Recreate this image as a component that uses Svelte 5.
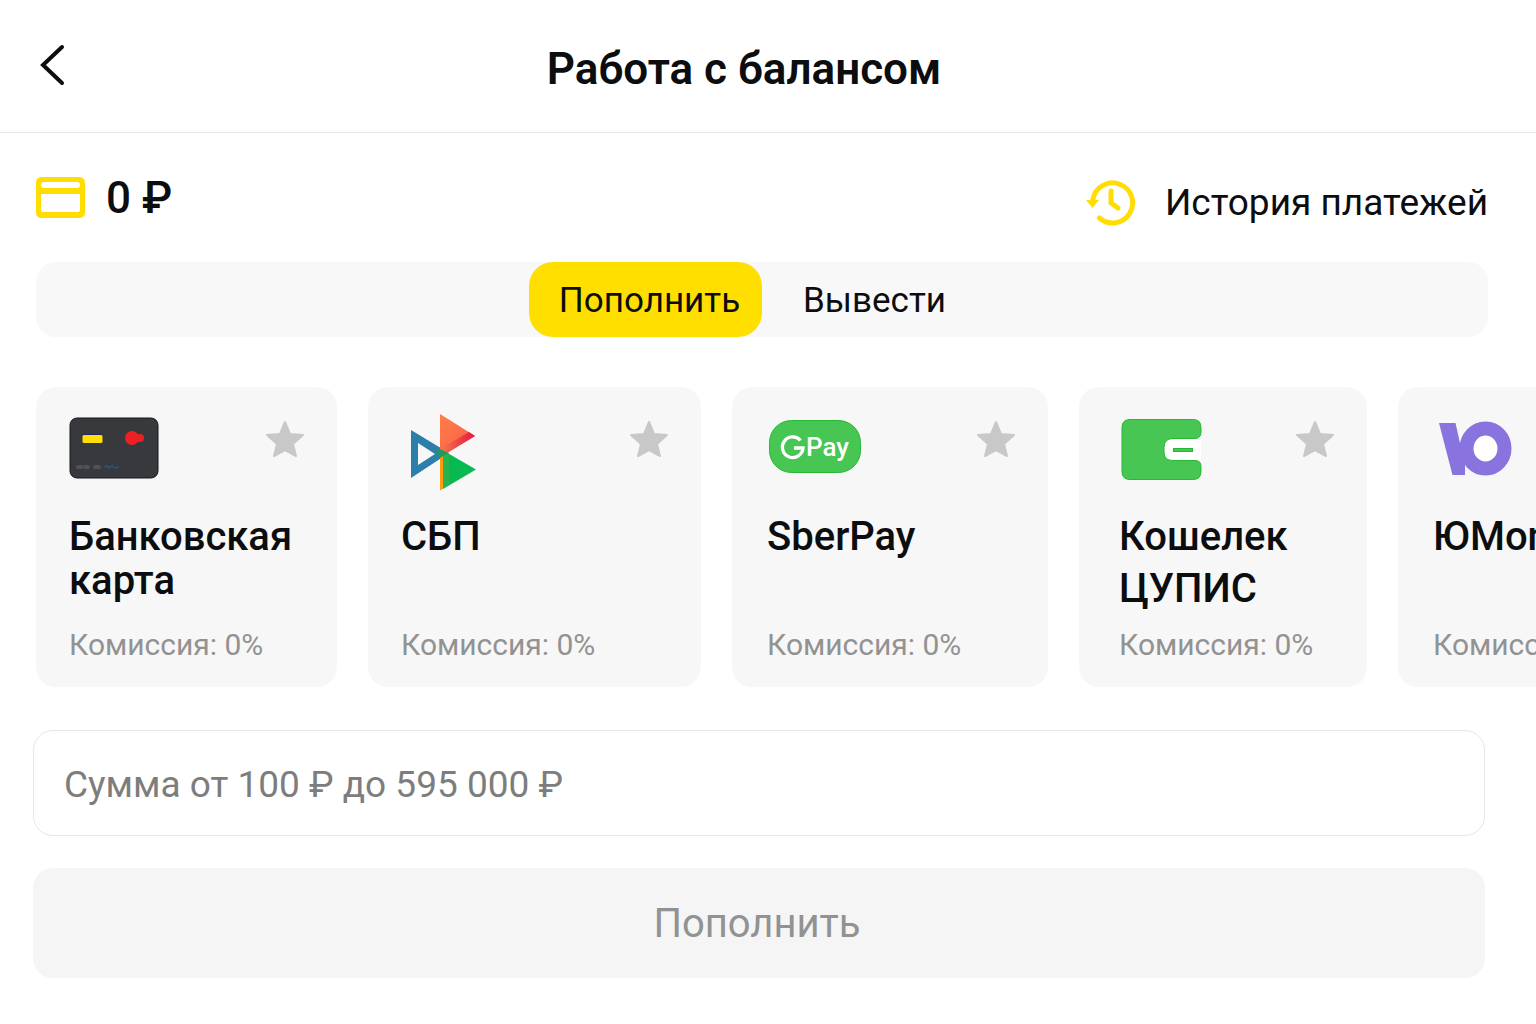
<script lang="ts">
  type Method = {
    id: string
    title: string
    fee: string
    width: number
    loose?: boolean
  }

  const methods: Method[] = [
    { id: 'card', title: 'Банковская карта', fee: '0%', width: 301 },
    { id: 'sbp', title: 'СБП', fee: '0%', width: 333 },
    { id: 'sber', title: 'SberPay', fee: '0%', width: 316 },
    { id: 'cupis', title: 'Кошелек ЦУПИС', fee: '0%', width: 288, loose: true },
    { id: 'yoo', title: 'ЮMoney', fee: '0%', width: 301 },
  ]

  let tab = $state<'in' | 'out'>('in')
  let selected = $state('')
  let amount = $state('')
</script>

{#snippet logo(id: string)}
  <svg class="logo" viewBox="0 0 96 80" aria-hidden="true">
    {#if id === 'card'}
      <rect x="1" y="6" width="88" height="60" rx="7" fill="#38393d" stroke="#17181c" />
      <path d="M14 22.500h18" stroke="#20246b" />
      <rect x="13.500" y="23" width="20" height="8" rx="1.500" fill="#ffe000" />
      <circle cx="63" cy="26" r="7" fill="#ee2024" />
      <circle cx="71" cy="26" r="4" fill="#ee2024" />
      <path d="M9 55h3M16 55h3M26 55h4" stroke="#505257" stroke-width="4" stroke-linecap="round" />
      <path d="M35 55l3-1 2 2 3-2 3 2 4-1" stroke="#2c5170" stroke-width="2" fill="none" />
    {:else if id === 'sbp'}
      <defs>
        <linearGradient id="sbp-orange" x1="0" y1="0" x2="1" y2="1">
          <stop offset="0" stop-color="#ff7f45" />
          <stop offset="1" stop-color="#fa5c4c" />
        </linearGradient>
        <linearGradient id="sbp-red" x1="0" y1="0" x2="1" y2="0">
          <stop offset="0" stop-color="#f47a4c" />
          <stop offset="1" stop-color="#e5173f" />
        </linearGradient>
      </defs>
      <path d="M10 18l38 23-38 25zM17 31v22l17-11z" fill="#2d7eaa" fill-rule="evenodd" />
      <path d="M39 2l35 22-28 17-7-4z" fill="url(#sbp-orange)" />
      <path d="M39 37l29-17 6 4-28 17z" fill="url(#sbp-red)" />
      <path d="M39 44h4v32l-4 2.500z" fill="#fd9c12" />
      <path d="M43 39l32 18.500-33 19.500z" fill="#06b950" />
      <path d="M34 40l5-3 8 4-8 5z" fill="#219861" />
      <path d="M42 44l6-3v31l-6 4z" fill="#2bb24c" />
    {:else if id === 'sber'}
      <rect x="2.500" y="8.500" width="91" height="52" rx="22" fill="#48c653" stroke="#24ba32" />
      <path d="M33.500 28.500A10.300 10.300 0 1 0 36 36H27" fill="none" stroke="#fff" stroke-width="3.300" />
      <text x="39" y="44" class="pay">Pay</text>
    {:else if id === 'cupis'}
      <path d="M82 27H55q-9 0-9 9v4q0 8 9 8h27z" fill="#fff" />
      <path
        d="M11 7.500h63q8 0 8 8v5q0 6-7 6H54q-9 0-9 9v5q0 8 9 8h22q6 0 6 6v5q0 8-8 8H11q-8 0-8-8V15.500q0-8 8-8z"
        fill="#48c653"
        stroke="#24ba32"
      />
      <rect x="54.500" y="36.500" width="19" height="3" fill="#48c653" stroke="#24ba32" />
    {:else}
      <ellipse cx="52.500" cy="36.500" rx="19" ry="20" fill="#fff" stroke="#8873df" stroke-width="14" />
      <path d="M6 11h16.500L27 31l5 20v12H19.500z" fill="#8873df" />
    {/if}
  </svg>
{/snippet}

<div class="page">
  <header>
    <button type="button" class="back" aria-label="Назад">
      <svg viewBox="0 0 32 44" aria-hidden="true"><path d="M26 3L7 21l19 18" /></svg>
    </button>
    <h1>Работа с балансом</h1>
  </header>

  <main>
    <div class="summary">
      <div class="balance">
        <svg viewBox="0 0 52 44" aria-hidden="true">
          <path
            fill-rule="evenodd"
            d="M6 1h37q6 0 6 6v29q0 6-6 6H6q-6 0-6-6V7q0-6 6-6zM8 6q-3 0-3 3t3 3h33q3 0 3-3t-3-3zM5 18v16q0 2 3 2h33q3 0 3-2V18z"
          />
        </svg>
        <span>0 ₽</span>
      </div>
      <a class="history" href="#history">
        <svg viewBox="0 0 52 48" aria-hidden="true">
          <path class="arc" d="M8 20A20 20 0 1 1 14.500 39" />
          <path class="hands" d="M26 12v12l7 5" />
          <path class="tip" d="M1 21h13l-6.500 8z" />
        </svg>
        <span>История платежей</span>
      </a>
    </div>

    <div class="tabs">
      <button type="button" class="tab" class:active={tab === 'in'} onclick={() => (tab = 'in')}>
        Пополнить
      </button>
      <button type="button" class="tab" class:active={tab === 'out'} onclick={() => (tab = 'out')}>
        Вывести
      </button>
    </div>

    <div class="methods">
      {#each methods as m (m.id)}
        <button
          type="button"
          class="method {m.id}"
          style="width: {m.width}px"
          aria-pressed={selected === m.id}
          onclick={() => (selected = m.id)}
        >
          <span class="top">
            {@render logo(m.id)}
            <svg class="star" viewBox="0 0 38 38" aria-hidden="true">
              <path d="M19 2l5 12 13 1-10 9 3 12-11-6-11 6 3-12L1 15l13-1z" />
            </svg>
          </span>
          <span class="title" class:loose={m.loose}>{m.title}</span>
          <span class="fee">Комиссия: {m.fee}</span>
        </button>
      {/each}
    </div>

    <form onsubmit={(e) => e.preventDefault()}>
      <input
        type="text"
        inputmode="numeric"
        aria-label="Сумма"
        placeholder="Сумма от 100 ₽ до 595 000 ₽"
        bind:value={amount}
      />
      <button type="submit" class="submit" disabled={!amount}>Пополнить</button>
    </form>
  </main>
</div>

<style>
  :global(body) {
    margin: 0;
    background: #fff;
  }
  .page {
    font-family: Roboto, 'Noto Sans', sans-serif;
    color: #0c0d0f;
    overflow: hidden;
  }
  button,
  input {
    font: inherit;
    color: inherit;
    border: none;
    box-sizing: border-box;
  }
  button {
    padding: 0;
    background: none;
    cursor: pointer;
  }
  header {
    display: grid;
    grid-template-columns: 48px 1fr 48px;
    align-items: center;
    height: 132px;
    padding: 0 84px 0 36px;
    border-bottom: 1px solid #e8e8e8;
  }
  .back {
    display: flex;
  }
  .back svg {
    width: 32px;
    height: 44px;
    fill: none;
    stroke: #0c0d0f;
    stroke-width: 4;
    stroke-linecap: round;
  }
  h1 {
    margin: 0;
    padding-top: 6px;
    font-size: 44px;
    font-weight: 600;
    line-height: 52px;
    text-align: center;
  }
  main {
    padding: 0 48px 0 36px;
  }
  .summary {
    display: flex;
    justify-content: space-between;
    align-items: center;
    height: 129px;
  }
  .balance,
  .history {
    display: flex;
    align-items: center;
  }
  .balance {
    gap: 18px;
    font-size: 44px;
    font-weight: 500;
  }
  .balance svg {
    width: 52px;
    height: 44px;
    fill: #ffdd00;
  }
  .history {
    gap: 28px;
    padding-top: 10px;
    color: inherit;
    font-size: 37px;
    text-decoration: none;
  }
  .history svg {
    width: 52px;
    height: 48px;
    fill: none;
    stroke: #ffdd00;
    stroke-linecap: round;
  }
  .history .arc,
  .history .hands {
    stroke-width: 5;
  }
  .history .tip {
    fill: #ffdd00;
    stroke: none;
  }
  .tabs {
    display: flex;
    justify-content: center;
    height: 75px;
    border-radius: 20px;
    background: #f8f8f8;
  }
  .tab {
    width: 233px;
    padding-top: 2px;
    border-radius: 24px;
    font-size: 35px;
  }
  .tab:first-child {
    padding-left: 8px;
  }
  .tab:last-child {
    padding-right: 8px;
  }
  .tab.active {
    background: #ffdf00;
  }
  .methods {
    display: flex;
    gap: 31px;
    margin: 50px -48px 0 0;
    overflow: hidden;
  }
  .method {
    display: flex;
    flex: none;
    flex-direction: column;
    height: 300px;
    padding: 25px 33px 24px;
    border-radius: 20px;
    background: #f7f7f7;
    text-align: left;
  }
  .sber,
  .yoo {
    padding-left: 35px;
  }
  .cupis {
    padding-left: 40px;
  }
  .top {
    display: flex;
    justify-content: space-between;
    align-self: stretch;
  }
  .logo {
    width: 96px;
    height: 80px;
  }
  .star {
    width: 38px;
    height: 38px;
    margin-top: 8px;
    fill: #c8c8c8;
    stroke: #c8c8c8;
    stroke-width: 2;
    stroke-linejoin: round;
  }
  .pay {
    fill: #fff;
    font-size: 26px;
    font-weight: 500;
  }
  .title {
    margin-top: 23px;
    font-size: 40px;
    font-weight: 500;
    line-height: 44px;
  }
  .title.loose {
    margin-top: 19px;
    line-height: 52px;
  }
  .fee {
    margin-top: auto;
    color: #929292;
    font-size: 30px;
    line-height: 36px;
    white-space: nowrap;
  }
  form {
    display: flex;
    flex-direction: column;
    gap: 32px;
    margin: 43px 3px 0 -3px;
  }
  input {
    height: 106px;
    padding: 2px 30px 0;
    border: 1px solid #e6e6e6;
    border-radius: 20px;
    background: #fff;
    font-size: 37px;
    outline: none;
  }
  input::placeholder {
    color: #7d7d7d;
    opacity: 1;
  }
  .submit {
    height: 110px;
    padding-right: 4px;
    border-radius: 20px;
    background: #f5f5f5;
    font-size: 40px;
  }
  .submit:disabled {
    color: #929292;
    cursor: default;
  }
</style>
